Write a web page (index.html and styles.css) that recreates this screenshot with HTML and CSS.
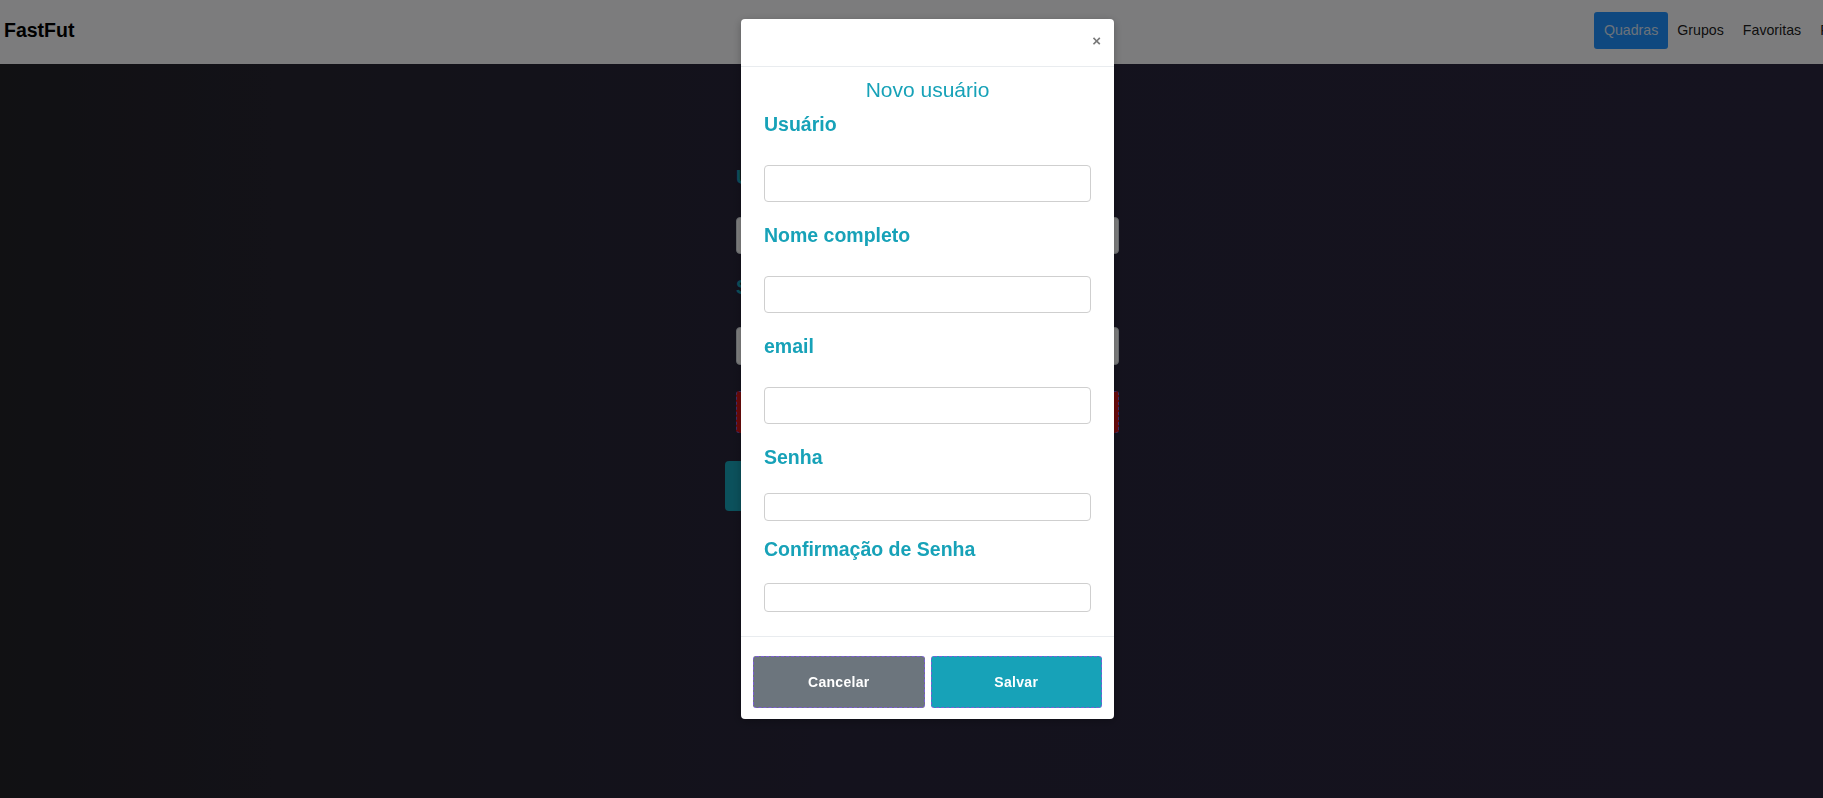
FILE: index.html
```html
<!DOCTYPE html>
<html lang="pt-BR">
<head>
<meta charset="utf-8">
<title>FastFut</title>
<link rel="stylesheet" href="styles.css">
</head>
<body>
  <header class="navbar">
    <a class="brand" href="#">FastFut</a>
    <nav class="nav">
      <a class="nav-link active" href="#">Quadras</a>
      <a class="nav-link" href="#">Grupos</a>
      <a class="nav-link" href="#">Favoritas</a>
      <a class="nav-link" href="#">Perfil</a>
    </nav>
  </header>

  <main class="page">
    <form class="login">
      <div class="login-field">
        <label class="login-label">Usuário</label>
        <input class="login-input" type="text">
      </div>
      <div class="login-field">
        <label class="login-label">Senha</label>
        <input class="login-input" type="password">
      </div>
      <button class="btn-danger" type="button">Entrar</button>
      <button class="btn-register" type="button">Cadastrar</button>
    </form>
  </main>

  <div class="backdrop"></div>

  <div class="modal-layer">
    <div class="modal">
      <div class="modal-header">
        <button class="close" type="button">×</button>
      </div>
      <div class="modal-body">
        <h4 class="modal-title">Novo usuário</h4>
        <div class="field">
          <label class="field-label">Usuário</label>
          <input class="input" type="text">
        </div>
        <div class="field">
          <label class="field-label">Nome completo</label>
          <input class="input" type="text">
        </div>
        <div class="field">
          <label class="field-label">email</label>
          <input class="input" type="email">
        </div>
        <div class="field field--short">
          <label class="field-label">Senha</label>
          <input class="input" type="password">
        </div>
        <div class="field field--tight">
          <label class="field-label">Confirmação de Senha</label>
          <input class="input" type="password">
        </div>
      </div>
      <div class="modal-footer">
        <button class="btn btn-secondary" type="button">Cancelar</button>
        <button class="btn btn-info" type="button">Salvar</button>
      </div>
    </div>
  </div>
</body>
</html>
```

FILE: styles.css
```css
* { box-sizing: border-box; }

html, body {
  margin: 0;
  height: 100%;
}

body {
  overflow: hidden;
  font-family: "Liberation Sans", Arial, sans-serif;
  background: linear-gradient(to right, #222227 0%, #262430 15%, #28253a 45%, #2b263f 100%);
}

/* ---------- navbar ---------- */
.navbar {
  width: 1862px;
  height: 64px;
  background: #f8f9fa;
  display: flex;
  align-items: center;
  padding: 0 0 3px 4px;
}

.brand {
  font-size: 19.5px;
  font-weight: bold;
  color: #000;
  text-decoration: none;
}

.nav {
  margin-left: auto;
  display: flex;
  align-items: center;
}

.nav-link {
  display: block;
  height: 37px;
  line-height: 37px;
  padding: 0 9.5px;
  font-size: 14.2px;
  color: rgba(0, 0, 0, 0.9);
  text-decoration: none;
  border-radius: 3px;
}

.nav-link.active {
  background: #1e90ff;
  color: #d6e4f5;
}

/* ---------- page behind ---------- */
.page {
  width: 1855px;
  padding-top: 99px;
}

.login {
  width: 383px;
  margin: 0 auto;
}

.login-field + .login-field { margin-top: 19px; }

.login-label {
  display: block;
  padding-top: 2px;
  font-size: 19.5px;
  line-height: 24px;
  font-weight: bold;
  color: #17a2b8;
}

.login-input {
  display: block;
  width: 100%;
  height: 37px;
  margin-top: 28px;
  border: 1px solid #ced4da;
  border-radius: 4px;
  background: #fff;
}

.login-field + .login-field .login-input { height: 38px; }

.btn-danger {
  display: block;
  width: 100%;
  height: 42px;
  margin-top: 26px;
  background: #d41616;
  color: #fff;
  border: 1px dashed #7b5cd6;
  border-radius: 3px;
  font: bold 14px "Liberation Sans", Arial, sans-serif;
}

.btn-register {
  display: block;
  width: 300px;
  height: 50px;
  margin: 28px 0 0 -11px;
  background: #17a2b8;
  color: #fff;
  border: 0;
  border-radius: 4px;
  font: bold 14px "Liberation Sans", Arial, sans-serif;
}

/* ---------- modal ---------- */
.backdrop {
  position: fixed;
  inset: 0;
  background: rgba(0, 0, 0, 0.5);
}

.modal-layer {
  position: fixed;
  top: 0;
  left: 0;
  width: 1855px;
  height: 100%;
  display: flex;
  justify-content: center;
  align-items: flex-start;
  padding-top: 19px;
}

.modal {
  width: 373px;
  background: #fff;
  border-radius: 4px;
  box-shadow: 0 2px 8px rgba(0, 0, 0, 0.25);
}

.modal-header {
  height: 48px;
  border-bottom: 1px solid #e9ecef;
  display: flex;
  align-items: center;
  justify-content: flex-end;
  padding: 0 13px 4px 0;
}

.close {
  background: none;
  border: 0;
  padding: 0;
  font: bold 15px "Liberation Sans", Arial, sans-serif;
  color: #7a7a7a;
  line-height: 1;
}

.modal-body {
  padding: 10px 23px 24px;
}

.modal-title {
  margin: 0 0 8px;
  text-align: center;
  font-size: 21px;
  line-height: 25px;
  font-weight: normal;
  color: #17a2b8;
}

.field + .field { margin-top: 19px; }

.field-label {
  display: block;
  padding-top: 2px;
  font-size: 19.5px;
  line-height: 24px;
  font-weight: bold;
  color: #17a2b8;
}

.input {
  display: block;
  width: 100%;
  height: 37px;
  margin-top: 29px;
  border: 1px solid #cfcfcf;
  border-radius: 4px;
  background: #fff;
}

.field--short .input {
  height: 28px;
  margin-top: 24px;
}

.field + .field--tight { margin-top: 14px; }

.field--tight .input {
  height: 29px;
  margin-top: 22px;
}

.modal-footer {
  border-top: 1px solid #e9ecef;
  padding: 19px 12px 11px;
  display: flex;
  gap: 6px;
}

.btn {
  flex: 1;
  height: 52px;
  border: 1px dashed #7b5cd6;
  border-radius: 3px;
  color: #fff;
  font: bold 14px "Liberation Sans", Arial, sans-serif;
  letter-spacing: 0.3px;
}

.btn-secondary { background: #6c757d; }
.btn-info { background: #17a2b8; }
```
